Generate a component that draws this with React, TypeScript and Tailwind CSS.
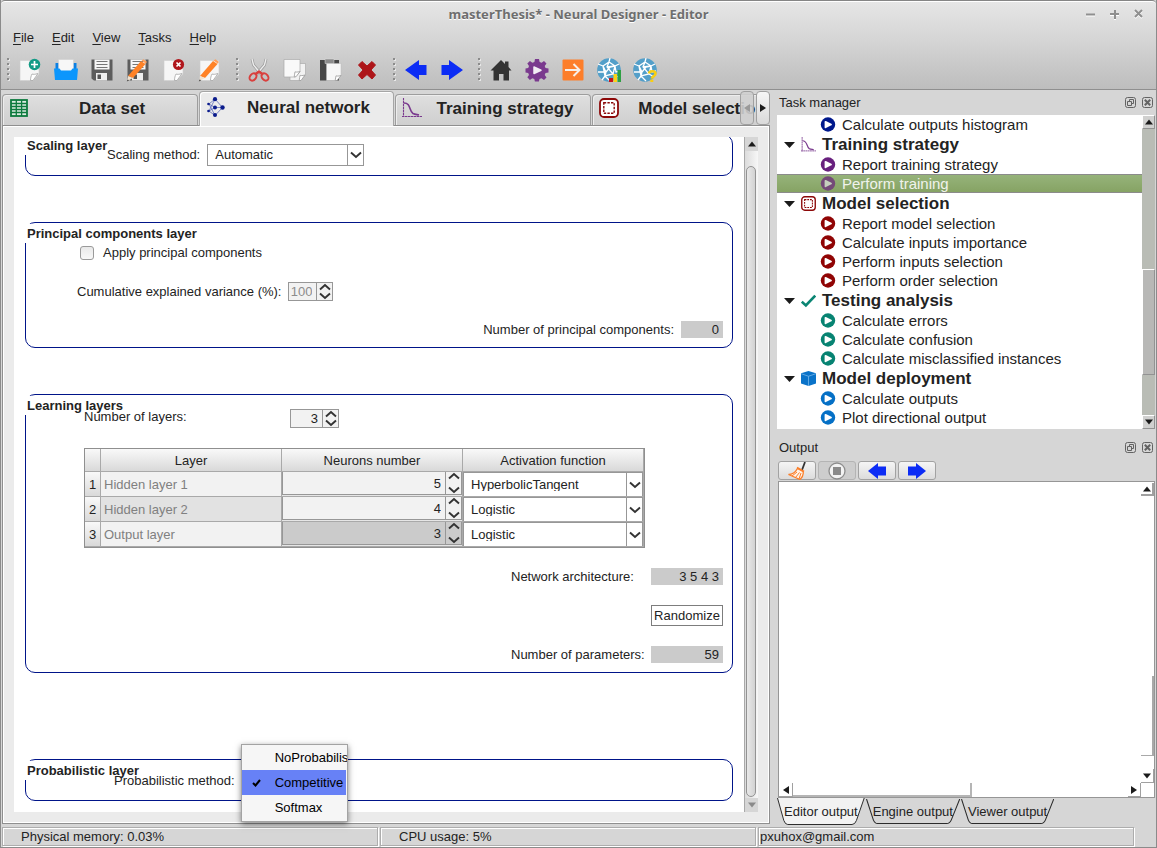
import React from "react";

type Kids = { children?: React.ReactNode };

/* ---------- toolbar drawings ---------- */

function Svg({ children }: Kids) {
  return (
    <svg viewBox="0 0 24 24" className="size-6" aria-hidden="true">
      {children}
    </svg>
  );
}

const sheet = (
  <>
    <path d="M2 2.500h19V16l-6 6.500H2z" fill="#f6f6f6" stroke="#cfcfcf" strokeWidth=".6" />
    <path d="M20 15.500c-3 1-5 1-6 .5-1 2-1.500 4-1.500 6.500H15z" fill="#fff" stroke="#a5a5a5" strokeWidth=".8" />
  </>
);

const pencil = (
  <>
    <path d="M2 18 15 3l4.500 3L7 20z" fill="#ff8227" />
    <path d="m15.500 2.500 2-1.200 3.300 2.400-.9 2z" fill="#ffa05c" />
    <path d="M2 18l5 2-5.500 3z" fill="#f3e3cf" />
    <path d="m1.700 21.500 1.500.8L.8 23.400z" fill="#333" />
  </>
);

const floppy = (
  <>
    <path d="M1.500 1.500h21v21H4l-2.500-2z" fill="#5d5d5d" />
    <path d="M4.500 1.500h15v10h-15z" fill="#f7f7f7" />
    <path d="M6.500 3.500h11M6.500 6.500h11M6.500 9.500h11" stroke="#777" />
    <path d="M6 15h11v7.500H6z" fill="#eee" />
    <path d="M7.500 16.500h3.500V21H7.500z" fill="#555" />
  </>
);

const globe = (
  <>
    <circle cx="12" cy="12" r="11.800" fill="#539fc9" />
    <path
      d="M6 8l6-4 6 4-2 8-8 2zM6 8 1 6M12 4l1-4M18 8l4-2M16 16l5 3M8 18l-3 4M6 8l3 6-1 4M12 4l-2 5 6 7M18 8l-5 1-4 5-8 0M10 9l8-1M8 18l5 5M18 8l1 6 4-1"
      fill="none"
      stroke="#fff"
      strokeWidth="1.300"
    />
  </>
);

const icons: Record<string, React.ReactNode> = {
  New: (
    <Svg>
      {sheet}
      <circle cx="16.500" cy="6.500" r="5.800" fill="#139b86" />
      <path d="M16.500 3v7M13 6.500h7" stroke="#fff" strokeWidth="1.700" />
    </Svg>
  ),
  Open: (
    <Svg>
      <path d="M1.500 5h21v8h-21z" fill="#0b80e4" />
      <path d="M4.500 1.500h15V14h-15z" fill="#f7f7f7" stroke="#cdcdcd" strokeWidth=".5" />
      <path d="M0 10.500h5.500l1.500 2h10l1.500-2H24L23 22H1z" fill="#0c96fc" />
    </Svg>
  ),
  Save: <Svg>{floppy}</Svg>,
  "Save as": (
    <Svg>
      {floppy}
      {pencil}
    </Svg>
  ),
  Close: (
    <Svg>
      {sheet}
      <circle cx="16.500" cy="6.500" r="5.600" fill="#b0161c" />
      <path d="m14.500 4.500 4 4m0-4-4 4" stroke="#fff" strokeWidth="1.700" />
    </Svg>
  ),
  Edit: (
    <Svg>
      {sheet}
      {pencil}
    </Svg>
  ),
  Cut: (
    <Svg>
      <path d="m5 1 1.500 6 8.500 10M19 1l-1.500 6L9 17" fill="none" stroke="#9a9a9a" strokeWidth="2.800" />
      <path d="m5 1 1.500 6 8.500 10M19 1l-1.500 6L9 17" fill="none" stroke="#eee" strokeWidth="1.400" />
      <ellipse cx="6" cy="19" rx="3" ry="4" transform="rotate(40 6 19)" fill="none" stroke="#d9403e" strokeWidth="2" />
      <ellipse cx="18" cy="19" rx="3" ry="4" transform="rotate(-40 18 19)" fill="none" stroke="#d9403e" strokeWidth="2" />
      <path d="m8 16.500 4-3 4 3" fill="none" stroke="#d9403e" strokeWidth="2.400" />
    </Svg>
  ),
  Copy: (
    <Svg>
      <path d="M7 5.500h15.500V17l-5 5.500H7z" fill="#f2f2f2" stroke="#aaa" strokeWidth=".7" />
      <path d="M22 17c-3 .8-4 .6-5 .3-.3 1.700-.5 3-.8 5.200H18z" fill="#fff" stroke="#999" strokeWidth=".8" />
      <path d="M1 1.500h16V14l-5 5H1z" fill="#f9f9f9" stroke="#aaa" strokeWidth=".7" />
      <path d="M17 13.500c-3 .8-4 .6-5 .3-.3 1.700-.5 3-.8 5H13z" fill="#fff" stroke="#999" strokeWidth=".8" />
    </Svg>
  ),
  Paste: (
    <Svg>
      <path d="M1 2h19v20.500H1z" fill="#474747" />
      <path d="M6 1h9v4.500H6z" fill="#8c8c8c" stroke="#ddd" strokeWidth=".5" />
      <path d="M7.500 5.500h14.500V18l-5 4.500H7.500z" fill="#f7f7f7" stroke="#bbb" strokeWidth=".5" />
      <path d="M22 17.500c-3 .8-4 .6-5 .3-.3 1.700-.5 2.500-.8 4.700H18z" fill="#fff" stroke="#999" strokeWidth=".8" />
    </Svg>
  ),
  Delete: (
    <Svg>
      <path
        d="M7 3.500 12 8l5-4.500L20.500 7 16 12l4.500 5-3.500 4-5-4.500L7 21l-3.500-4L8 12 3.500 7z"
        fill="#ad1519"
        stroke="#ad1519"
        strokeLinejoin="round"
      />
    </Svg>
  ),
  Back: (
    <Svg>
      <path d="M1 12 15 2v5h7.500v10H15v5z" fill="#0c2cf5" />
    </Svg>
  ),
  Forward: (
    <Svg>
      <path d="M23 12 9 2v5H1.500v10H9v5z" fill="#0c2cf5" />
    </Svg>
  ),
  Home: (
    <Svg>
      <path d="M12 2 1.500 12.500h3v10h5.500V16h4.500v6.500H20v-10h2.500L19.500 9V3.500H16V6z" fill="#333" />
    </Svg>
  ),
  Run: (
    <Svg>
      <path
        d="M10 1h4l.6 3 2 .8L19 3l2.500 2.500L19.700 8l.8 2 3 .6v3.800l-3 .6-.8 2 1.800 2.500L19 22l-2.500-1.700-2 .8-.6 2.400h-4l-.6-2.500-2-.8L4.900 22l-2.600-2.700L4 17l-.8-2-2.700-.6v-3.800l2.700-.6L4 8 2.300 5.500 4.900 3l2.500 1.800 2-.8z"
        fill="#7a3a8e"
      />
      <path d="m9 9 7 3.300L9 15.500z" fill="#f2eef4" stroke="#f2eef4" strokeWidth="1.500" strokeLinejoin="round" />
    </Svg>
  ),
  Export: (
    <Svg>
      <rect x="1.500" y="1.500" width="21" height="21" rx="1" fill="#fd7e2a" />
      <path d="M4 12h14M12.500 6l6 6-6 6" fill="none" stroke="#f7efe8" strokeWidth="2" />
    </Svg>
  ),
  Report: (
    <Svg>
      {globe}
      <path d="M12 20h4v4h-4z" fill="#c81518" />
      <path d="M16.500 16h3.500v8h-3.500z" fill="#fcd414" />
      <path d="M20.500 12H24v12h-3.500z" fill="#2ea043" />
    </Svg>
  ),
  Help: (
    <Svg>
      {globe}
      <path d="M16 15.500c.5-3 6.500-3 6.500.2 0 2.400-3.500 2.300-3.700 5" fill="none" stroke="#f8ce12" strokeWidth="2.600" />
      <path d="M17.300 21.500h3V24h-3z" fill="#f8ce12" />
    </Svg>
  ),
};

const toolGroups = [
  ["New", "Open", "Save", "Save as", "Close", "Edit"],
  ["Cut", "Copy", "Paste", "Delete"],
  ["Back", "Forward"],
  ["Home", "Run", "Export", "Report", "Help"],
];

function Handle() {
  return (
    <svg viewBox="0 0 3 24" className="mr-[2px] h-6 w-[3px]" aria-hidden="true">
      {[0, 5, 10, 15, 20].map((y) => (
        <g key={y}>
          <rect x="1" y={y + 1} width="2" height="2" fill="#e8e8e8" />
          <rect x="0" y={y} width="2" height="2" fill="#8b8b8b" />
        </g>
      ))}
    </svg>
  );
}

/* ---------- section drawings ---------- */

function CurveIcon() {
  return (
    <svg viewBox="0 0 20 20" className="size-full" fill="none" stroke="#7a3a8e" aria-hidden="true">
      <path d="M1.500 0v19M0 18.500h20" strokeWidth="1.100" strokeDasharray="2.500 .5" />
      <path d="M2 5c7 0 5 8 9 10.500 2 1 4 1 6 1.500" strokeWidth="1.600" />
    </svg>
  );
}

function SelectionIcon() {
  return (
    <svg viewBox="0 0 20 20" className="size-full" aria-hidden="true">
      <rect x="1" y="1" width="18" height="18" rx="4" fill="#fff" stroke="#8c0808" strokeWidth="1.800" />
      <rect x="4.800" y="4.800" width="10.400" height="10.400" fill="none" stroke="#8c0808" strokeWidth="1.400" strokeDasharray="2.400 1.200" />
    </svg>
  );
}

function GridIcon() {
  return (
    <svg viewBox="0 0 20 20" className="size-full" aria-hidden="true">
      <rect x="2" y="2" width="16" height="16" fill="#dcebe2" stroke="#0d7a3e" strokeWidth="1.800" />
      <path d="M2 5.500h16M2 8.500h16M2 11.500h16M2 14.500h16M7.300 2v16M12.600 2v16" stroke="#0d7a3e" strokeWidth="1.300" />
    </svg>
  );
}

function NetworkIcon() {
  return (
    <svg viewBox="0 0 20 20" className="size-full" aria-hidden="true">
      <path
        d="M3 7l6-5M3 7l6 3.500M3 7l6 11.500M3 14l6-12M3 14l6-3.500M3 14l6 4.500M9 2l7.500 8.500M9 10.500h7.500M9 18.500l7.500-8"
        stroke="#4a5bb5"
        strokeWidth=".7"
      />
      <g fill="#0a1b8c">
        <circle cx="2.500" cy="7" r="1.300" />
        <circle cx="2.500" cy="14" r="1.300" />
        <circle cx="9" cy="2.200" r="2.100" />
        <circle cx="9" cy="10.500" r="2" />
        <circle cx="9" cy="18" r="2" />
        <circle cx="16.500" cy="10.500" r="2.200" />
      </g>
    </svg>
  );
}

function TickIcon() {
  return (
    <svg viewBox="0 0 20 20" className="size-full" aria-hidden="true">
      <path d="M1 11.500 6.500 16.500 19 3.500" fill="none" stroke="#0a8573" strokeWidth="3.600" />
    </svg>
  );
}

function CubeIcon() {
  return (
    <svg viewBox="0 0 20 20" className="size-full" aria-hidden="true">
      <path d="M0 3 10 0l10 3v13.500L10 20 0 16.500z" fill="#0a73c9" />
      <path d="m0 3.500 10 3.500 10-3.500M10 7v13" fill="none" stroke="#7db9ea" />
    </svg>
  );
}

function PlayDot({ color, dim }: { color: string; dim?: boolean }) {
  return (
    <svg viewBox="0 0 16 16" className="size-4 shrink-0" aria-hidden="true">
      <circle cx="8" cy="7.500" r="7.200" fill={color} />
      <path
        d="M5.500 4.800 11 7.500l-5.500 2.800z"
        fill={dim ? "#c5d0bd" : "#fff"}
        stroke={dim ? "#c5d0bd" : "#fff"}
        strokeWidth="1.800"
        strokeLinejoin="round"
      />
    </svg>
  );
}

function Triangle({ dir, color = "#1b1b1b" }: { dir: "up" | "down" | "left" | "right"; color?: string }) {
  const d = {
    up: "M1 7.500h8L5 2.500z",
    down: "M1 2.500h8L5 7.500z",
    left: "M8 1v8L2 5z",
    right: "M2 1v8l6-4z",
  }[dir];
  return (
    <svg viewBox="0 0 10 10" className="size-[10px] shrink-0" aria-hidden="true">
      <path d={d} fill={color} />
    </svg>
  );
}

/* ---------- form parts ---------- */

function Chevron({ up }: { up?: boolean }) {
  return (
    <svg viewBox="0 0 12 8" className="h-2 w-3" fill="none" stroke="#333" strokeWidth="1.900" aria-hidden="true">
      <path d={up ? "M1 6.500l5-4.500L11 6.500" : "M1 1.500l5 4.500L11 1.500"} />
    </svg>
  );
}

function Combo({ id, label, value, className, clipped }: { id: string; label?: string; value: string; className: string; clipped?: boolean }) {
  return (
    <div className={`relative flex border border-[#979797] bg-white ${className}`}>
      <select
        id={id}
        aria-label={label}
        defaultValue={value}
        className={
          clipped
            ? "mt-1 mb-[5px] block h-[14px] w-full appearance-none overflow-hidden pl-[7px] pr-4 text-[13px] leading-[15px]"
            : "block h-full w-full appearance-none pl-[7px] pr-4 text-[13px]"
        }
      >
        <option>{value}</option>
      </select>
      <span className="pointer-events-none absolute inset-y-0 right-0 flex w-4 items-center justify-center border-l border-[#979797]">
        <Chevron />
      </span>
    </div>
  );
}

function Spin({ id, label, value, className, disabled }: { id: string; label?: string; value: number; className: string; disabled?: boolean }) {
  return (
    <div className={`flex border border-[#979797] ${className}`}>
      <input
        id={id}
        aria-label={label}
        type="number"
        defaultValue={value}
        disabled={disabled}
        className="h-full w-0 min-w-0 flex-1 appearance-none pr-1 text-right text-[13px] [-moz-appearance:textfield] disabled:text-[#8c8c8c] [&::-webkit-inner-spin-button]:appearance-none"
      />
      <div className="flex w-4 flex-col items-center justify-between border-l border-[#979797]">
        <button type="button" aria-label="Increase">
          <span className="block">
            <Chevron up />
          </span>
        </button>
        <button type="button" aria-label="Decrease">
          <span className="block">
            <Chevron />
          </span>
        </button>
      </div>
    </div>
  );
}

function Group({ title, className, children }: Kids & { title: string; className: string }) {
  return (
    <section className={`mr-[11px] ml-[11px] flow-root rounded-[10px] border border-[#001489] ${className}`}>
      <h3 className="mt-px -ml-px h-[19px] w-fit bg-white pt-[2px] pl-[2px] leading-4 font-bold">{title}</h3>
      {children}
    </section>
  );
}

function ReadOut({ id, children, className }: Kids & { id: string; className: string }) {
  return (
    <output id={id} className={`block h-[17px] bg-[#cbcbcb] pr-1 text-right leading-[17px] ${className}`}>
      {children}
    </output>
  );
}

const layers = [
  { name: "Hidden layer 1", neurons: 5, fn: "HyperbolicTangent", bg: "bg-[#f2f2f2]", spin: "bg-[#f2f2f2]" },
  { name: "Hidden layer 2", neurons: 4, fn: "Logistic", bg: "bg-[#e2e2e2]", spin: "bg-[#f2f2f2]" },
  { name: "Output layer", neurons: 3, fn: "Logistic", bg: "bg-[#f2f2f2]", spin: "bg-[#cbcbcb]" },
];

function LayerTable() {
  const th = "h-[23px] border-r border-b border-[#a9a9a9] bg-linear-to-b from-[#f9f9f9] to-[#d9d9d9] p-0 pt-px font-normal";
  return (
    <table className="mt-5 ml-[58px] w-[561px] table-fixed border-separate border-spacing-0 border border-[#8f8f8f]">
      <colgroup>
        <col className="w-4" />
        <col className="w-[181px]" />
        <col className="w-[181px]" />
        <col />
      </colgroup>
      <thead>
        <tr>
          <th className={th} aria-label="Row" />
          <th className={th}>Layer</th>
          <th className={th}>Neurons number</th>
          <th className={th}>Activation function</th>
        </tr>
      </thead>
      <tbody>
        {layers.map((l, i) => (
          <tr key={l.name}>
            <th className="h-[25px] border-r border-b border-[#a9a9a9] bg-linear-to-b from-[#f9f9f9] to-[#d9d9d9] p-0 pt-px font-normal">{i + 1}</th>
            <td className={`border-r border-b border-[#a9a9a9] p-0 pt-px pl-[3px] text-[#808080] ${l.bg}`}>{l.name}</td>
            <td className="border-r border-b border-[#a9a9a9] bg-[#e6e6e6] p-0 align-top">
              <Spin id={`neurons-${i}`} label={`${l.name} neurons`} value={l.neurons} className={`h-[23px] border-t-0 ${l.spin}`} />
            </td>
            <td className="border-r border-b border-[#a9a9a9] p-0 align-top">
              <Combo id={`fn-${i}`} label={`${l.name} activation`} value={l.fn} className="h-6 border-b-0" clipped />
            </td>
          </tr>
        ))}
      </tbody>
    </table>
  );
}

function MethodMenu() {
  const items = ["NoProbabilistic", "Competitive", "Softmax"];
  return (
    <div className="relative">
      <select id="prob-method" defaultValue="Competitive" className="block h-5 w-[107px] appearance-none border border-[#979797] pl-2">
        {items.map((m) => (
          <option key={m}>{m}</option>
        ))}
      </select>
      <ul
        role="listbox"
        aria-label="Probabilistic method"
        className="absolute -top-7 left-0 z-10 w-[107px] overflow-hidden border border-[#a3a3a3] bg-[#f6f6f6] pb-px text-black shadow-[0_2px_6px_rgba(0,0,0,0.5)]"
      >
        {items.map((m) => {
          const on = m === "Competitive";
          return (
            <li
              key={m}
              role="option"
              aria-selected={on}
              className={`flex h-[25px] items-center whitespace-nowrap ${on ? "mr-px bg-[#6781f6]" : ""}`}
            >
              <span className="flex w-[33px] shrink-0 justify-center pr-1">
                {on && (
                  <svg viewBox="0 0 9 8" className="h-2 w-[9px]" aria-hidden="true">
                    <path d="m1 4 2.500 2.500L8 1" fill="none" stroke="#000" strokeWidth="2" />
                  </svg>
                )}
              </span>
              {m}
            </li>
          );
        })}
      </ul>
    </div>
  );
}

function NetworkPane() {
  return (
    <div className="relative z-10 flex flex-1 border border-[#8f8f8f] bg-[#ebebeb] p-[11px] shadow-[inset_1px_1px_0_#fff,inset_-1px_-1px_0_#fff]">
      <div className="min-w-0 flex-1 bg-white pb-[11px] [clip-path:inset(0_0_-24px_0)]">
        <Group title="Scaling layer" className="-mt-[3px] h-[42px]">
          <div className="-mt-[11px] flex items-center gap-[7px] pl-[81px]">
            <label htmlFor="scaling">Scaling method:</label>
            <Combo id="scaling" value="Automatic" className="h-[22px] w-[157px]" />
          </div>
        </Group>

        <Group title="Principal components layer" className="mt-[46px] pb-[9px]">
          <div className="mt-[2px] flex h-[15px] items-center gap-[9px] pl-[54px]">
            <input
              id="apply-pc"
              type="checkbox"
              className="size-[14px] appearance-none rounded-[3px] border border-[#9a9a9a] bg-linear-to-b from-[#e9e9e9] to-[#f8f8f8]"
            />
            <label htmlFor="apply-pc">Apply principal components</label>
          </div>
          <div className="mt-[22px] flex items-center gap-[7px] pl-[51px]">
            <label htmlFor="variance">Cumulative explained variance (%):</label>
            <Spin id="variance" value={100} disabled className="h-[19px] w-[45px] bg-[#f2f2f2]" />
          </div>
          <div className="mt-5 flex items-center justify-end gap-[7px] pr-[9px]">
            <label htmlFor="pc-count">Number of principal components:</label>
            <ReadOut id="pc-count" className="w-[42px]">0</ReadOut>
          </div>
        </Group>

        <Group title="Learning layers" className="mt-[46px] pb-[9px]">
          <div className="-mt-[6px] flex h-[19px] items-start pl-[58px]">
            <label htmlFor="layer-count" className="w-[206px] leading-[15px]">
              Number of layers:
            </label>
            <Spin id="layer-count" value={3} className="h-[19px] w-[49px] bg-[#f2f2f2]" />
          </div>
          <LayerTable />
          <div className="mt-5 grid grid-cols-[133px_72px] items-center justify-end gap-x-[7px] gap-y-5 pr-[9px]">
            <label htmlFor="architecture">Network architecture:</label>
            <ReadOut id="architecture" className="w-full">3 5 4 3</ReadOut>
            <button type="button" className="col-start-2 h-[21px] border border-[#7d7d7d] bg-white">
              Randomize
            </button>
            <label htmlFor="params" className="whitespace-nowrap">Number of parameters:</label>
            <ReadOut id="params" className="w-full">59</ReadOut>
          </div>
        </Group>

        <Group title="Probabilistic layer" className="mt-[86px] h-[42px]">
          <div className="-mt-2 flex items-start gap-[6px] pl-[88px]">
            <label htmlFor="prob-method" className="leading-[18px]">
              Probabilistic method:
            </label>
            <MethodMenu />
          </div>
        </Group>
      </div>

      <div className="flex w-[14px] flex-col border-l border-[#a9a9a9] bg-linear-to-r from-[#dcdcdc] to-[#f7f7f7]">
        <div className="flex h-[14px] items-center justify-center bg-[#d6d6d6]">
          <Triangle dir="up" />
        </div>
        <div className="mt-[15px] mb-px ml-px w-[10px] flex-1 rounded-full border border-[#939393] bg-linear-to-r from-[#e9e9e9] to-[#d2d2d2]" />
        <div className="flex h-[14px] items-center justify-center bg-[#d6d6d6]">
          <Triangle dir="down" color="#8a8a8a" />
        </div>
      </div>
    </div>
  );
}

const tabs = [
  { label: "Data set", icon: <GridIcon /> },
  { label: "Neural network", icon: <NetworkIcon />, active: true },
  { label: "Training strategy", icon: <CurveIcon /> },
  { label: "Model selection", icon: <SelectionIcon /> },
];

function TabRow() {
  const step = "flex h-[34px] w-[14px] items-center justify-center rounded-[4px] border border-[#a0a0a0]";
  return (
    <div className="relative z-20 -mb-px flex h-9 items-start overflow-hidden pt-px">
      {tabs.map((t) => (
        <button
          key={t.label}
          type="button"
          className={
            t.active
              ? "mr-px flex h-[35px] w-[195px] shrink-0 items-start rounded-t-[4px] border border-b-0 border-[#a6a6a6] bg-[#ebebeb] pt-[5px] pr-[2px] pl-[6px] shadow-[inset_1px_1px_0_#fff]"
              : "mt-[3px] mr-px flex h-[31px] w-[196px] shrink-0 items-start rounded-t-[4px] border border-b-0 border-[#9d9d9d] bg-linear-to-b from-[#dfdfdf] to-[#cfcfcf] pt-[3px] pr-[2px] pl-[6px] shadow-[inset_1px_1px_0_#ededed]"
          }
        >
          <span className="size-5 shrink-0">{t.icon}</span>
          <span className="flex-1 text-center text-[17px] leading-[22px] font-bold whitespace-nowrap">{t.label}</span>
        </button>
      ))}
      <div className="absolute top-px right-0 flex gap-[2px]">
        <button type="button" aria-label="Scroll tabs left" className={`${step} bg-[#cfcfcf]/90`}>
          <Triangle dir="left" color="#9a9a9a" />
        </button>
        <button type="button" aria-label="Scroll tabs right" className={`${step} bg-linear-to-b from-[#f6f6f6] to-[#dadada]`}>
          <Triangle dir="right" />
        </button>
      </div>
    </div>
  );
}

/* ---------- right side ---------- */

function DockTitle({ children }: Kids) {
  return (
    <div className="flex h-[25px] items-center gap-[6px] pr-[3px] pl-[2px]">
      <h2 className="flex-1">{children}</h2>
      <button type="button" aria-label="Float">
        <svg viewBox="0 0 11 11" className="size-[11px]" fill="none" stroke="#636363" aria-hidden="true">
          <rect x=".5" y=".5" width="10" height="10" rx="2" />
          <path d="M4.500 2.500h4v4h-2M4.500 2.500v2M2.500 4.500h4v4h-4z" />
        </svg>
      </button>
      <button type="button" aria-label="Close panel">
        <svg viewBox="0 0 11 11" className="size-[11px]" fill="none" stroke="#636363" aria-hidden="true">
          <rect x=".5" y=".5" width="10" height="10" rx="2" />
          <path d="m2.800 2.800 5.400 5.400m0-5.400L2.800 8.200" strokeWidth="2" />
        </svg>
      </button>
    </div>
  );
}

const tree: { label: string; color?: string; icon?: React.ReactNode; selected?: boolean }[] = [
  { label: "Calculate outputs histogram", color: "#00188c" },
  { label: "Training strategy", icon: <CurveIcon /> },
  { label: "Report training strategy", color: "#68207e" },
  { label: "Perform training", color: "#744a78", selected: true },
  { label: "Model selection", icon: <SelectionIcon /> },
  { label: "Report model selection", color: "#900404" },
  { label: "Calculate inputs importance", color: "#900404" },
  { label: "Perform inputs selection", color: "#900404" },
  { label: "Perform order selection", color: "#900404" },
  { label: "Testing analysis", icon: <TickIcon /> },
  { label: "Calculate errors", color: "#078372" },
  { label: "Calculate confusion", color: "#078372" },
  { label: "Calculate misclassified instances", color: "#078372" },
  { label: "Model deployment", icon: <CubeIcon /> },
  { label: "Calculate outputs", color: "#0570c6" },
  { label: "Plot directional output", color: "#0570c6" },
];

function TaskManager() {
  const knob = "flex h-[14px] items-center justify-center border border-[#929292] border-t-white border-l-white bg-[#d0d0cf]";
  return (
    <section>
      <DockTitle>Task manager</DockTitle>
      <div className="mr-px flex h-[314px]">
        <ul className="min-w-0 flex-1 overflow-hidden bg-white">
          {tree.map((n) =>
            n.icon ? (
              <li key={n.label} className="flex h-[21px] items-center pl-[7px] text-[17px] leading-[21px] font-bold">
                <svg viewBox="0 0 11 6" className="mr-[6px] h-[6px] w-[11px] shrink-0" aria-hidden="true">
                  <path d="M0 0h11L5.500 6z" fill="#1b1b1b" />
                </svg>
                <span className="mr-[6px] size-[15px] shrink-0">{n.icon}</span>
                {n.label}
              </li>
            ) : (
              <li
                key={n.label}
                className={`flex h-[19px] items-center gap-[6px] pl-[43px] text-[15px] leading-[19px] ${
                  n.selected ? "border-y border-[#8b8b8b] bg-linear-to-b from-[#96b37a] to-[#86a364] text-[#f0f3ec]" : ""
                }`}
              >
                <PlayDot color={n.color ?? ""} dim={n.selected} />
                {n.label}
              </li>
            ),
          )}
        </ul>
        <div className="flex w-[13px] flex-col bg-[#b9bcb5]">
          <div className={knob}>
            <Triangle dir="up" />
          </div>
          <div className="mt-[140px] h-[106px] border border-[#929292] border-t-white border-l-white bg-[#b8b8b6]" />
          <div className={`${knob} mt-auto`}>
            <Triangle dir="down" />
          </div>
        </div>
      </div>
    </section>
  );
}

function Broom() {
  return (
    <svg viewBox="0 0 20 18" className="h-[18px] w-5" aria-hidden="true">
      <path d="M18 0 15 8" stroke="#333" strokeWidth="1.800" />
      <path d="M10.500 6.500 16 9.500c1 3-1 6-3 8L1.500 12.500c4 0 7-2.500 9-6z" fill="#fff2e6" stroke="#fb7f2b" strokeWidth="1.300" />
      <path d="m5 14 5-4M8.500 15.500l4-5M12 17l2-6" stroke="#fb7f2b" fill="none" />
      <path d="m10 5.500 7 4" stroke="#fb7f2b" strokeWidth="1.600" />
    </svg>
  );
}

const outputTabs = ["Editor output", "Engine output", "Viewer output"];

function OutputPanel() {
  const btn = "flex h-[19px] w-[38px] items-center justify-center rounded-[3px] border border-[#a2a2a2] bg-linear-to-b from-[#f5f5f5] to-[#dcdcdc]";
  const small = "flex items-center justify-center border-[#a0a0a0]";
  return (
    <section className="mt-[6px] flex flex-1 flex-col">
      <DockTitle>Output</DockTitle>
      <div className="mt-px flex gap-[2px] pl-px">
        <button type="button" aria-label="Clear" className={btn}>
          <Broom />
        </button>
        <button type="button" aria-label="Stop" className="flex h-[19px] w-[38px] items-center justify-center rounded-[3px] border border-[#b4b4b4] bg-[#cdcdcd]">
          <svg viewBox="0 0 18 18" className="size-[18px]" aria-hidden="true">
            <circle cx="9" cy="9" r="8" fill="#f3f3f3" stroke="#8d8d8d" strokeWidth="1.300" />
            <path d="M5 5h8v8H5z" fill="#8a8a8a" />
          </svg>
        </button>
        <button type="button" aria-label="Previous" className={btn}>
          <svg viewBox="0 0 18 16" className="h-4 w-[18px]" aria-hidden="true">
            <path d="M0 8 10 0v3.500h8v9h-8V16z" fill="#0c2cf5" />
          </svg>
        </button>
        <button type="button" aria-label="Next" className={btn}>
          <svg viewBox="0 0 18 16" className="h-4 w-[18px]" aria-hidden="true">
            <path d="M18 8 8 0v3.500H0v9h8V16z" fill="#0c2cf5" />
          </svg>
        </button>
      </div>

      <div className="mt-px mr-px ml-px flex flex-1 flex-col border border-[#969696] bg-white pt-px">
        <div className="flex flex-1">
          <textarea readOnly aria-label="Editor output" className="min-w-0 flex-1 resize-none outline-none" />
          <div className="flex w-[13px] flex-col">
            <div className={`${small} h-[13px] border-r-2 border-b-2`}>
              <Triangle dir="up" />
            </div>
            <div className="mt-auto h-20 border-r-2 border-b border-[#a9a9a9]" />
            <div className={`${small} mt-[13px] h-[14px] border-r border-b`}>
              <Triangle dir="down" />
            </div>
          </div>
        </div>
        <div className="flex h-[14px] pr-[13px]">
          <div className={`${small} w-[14px] border-r border-b`}>
            <Triangle dir="left" />
          </div>
          <div className="w-[179px] border-r-2 border-b-2 border-[#b5b5b5]" />
          <div className={`${small} ml-auto w-[13px] border-r border-b`}>
            <Triangle dir="right" />
          </div>
        </div>
      </div>

      <div className="flex h-[27px] items-start gap-px">
        {outputTabs.map((t, i) => (
          <button key={t} type="button" className={i === 0 ? "relative h-[27px] px-[7px]" : "relative mt-px h-[25px] px-[7px]"}>
            <svg viewBox="0 0 90 27" preserveAspectRatio="none" className="absolute inset-0 size-full" aria-hidden="true">
              <path
                d="M.5 0 7 22.500Q8.500 26.500 11 26.500H77Q80 26.500 81.500 22.500L89.500 0"
                fill={i === 0 ? "#f2f2f2" : "none"}
                stroke="#2a2a2a"
                strokeWidth="1"
              />
            </svg>
            <span className="relative whitespace-nowrap">{t}</span>
          </button>
        ))}
      </div>
    </section>
  );
}

/* ---------- window ---------- */

export default function App() {
  return (
    <div className="flex min-h-screen flex-col border-r border-b border-l border-[#8b8b8b] bg-[#d6d6d6] font-['Liberation_Sans',Arial,sans-serif] text-[13px] leading-4 text-[#232323]">
      <header className="rounded-t-[4px] border-t border-b border-t-[#858585] border-b-[#8f8f8f] bg-linear-to-b from-[#e6e6e6] via-[#d5d5d5] via-45% to-[#bdbdbd] shadow-[inset_0_1px_0_#fff]">
        <div className="relative flex h-[26px] items-center justify-center">
          <h1 className="font-['Noto_Sans','Open_Sans',sans-serif] text-[13px] font-bold text-[#6e6e6e] [text-shadow:0_1px_0_#fff]">
            masterThesis* - Neural Designer - Editor
          </h1>
          <div className="absolute right-3 flex gap-[14px]">
            {["M0 5.500h9", "M0 5h9M5 1v9", "m1 1 7 7m0-7L1 8"].map((d, i) => (
              <button key={d} type="button" aria-label={["Minimize", "Maximize", "Close"][i]}>
                <svg viewBox="0 0 10 11" className="h-[11px] w-[10px]" fill="none" strokeWidth="2" aria-hidden="true">
                  <path d={d} stroke="#fff" transform="translate(0 1)" />
                  <path d={d} stroke="#8f8f8f" />
                </svg>
              </button>
            ))}
          </div>
        </div>
        <nav className="flex h-[22px] items-center gap-[18px] pl-3">
          {["File", "Edit", "View", "Tasks", "Help"].map((m) => (
            <button key={m} type="button">
              <u className="underline-offset-2">{m[0]}</u>
              {m.slice(1)}
            </button>
          ))}
        </nav>
        <div className="flex h-10 items-center gap-2 pt-px pl-[6px]">
          {toolGroups.map((g) => (
            <div key={g[0]} className="flex items-center">
              <Handle />
              {g.map((name) => (
                <button key={name} type="button" aria-label={name} className="flex w-9 justify-center">
                  {icons[name]}
                </button>
              ))}
            </div>
          ))}
        </div>
      </header>

      <main className="flex flex-1">
        <div className="flex min-w-0 flex-1 flex-col pb-px pl-px">
          <TabRow />
          <NetworkPane />
        </div>
        <aside className="flex w-[386px] shrink-0 flex-col pl-[7px]">
          <TaskManager />
          <OutputPanel />
        </aside>
      </main>

      <footer className="flex h-[22px] gap-[2px] pt-[2px] pr-[22px] pb-px pl-px">
        {[
          { text: "Physical memory: 0.03%", pad: "pl-[18px]" },
          { text: "CPU usage: 5%", pad: "pl-[18px]" },
          { text: "pxuhox@gmail.com", pad: "pl-px" },
        ].map((s) => (
          <div key={s.text} className="flex flex-1 items-center border border-[#adadad] shadow-[inset_1px_1px_0_#fff,1px_1px_0_#fff]">
            <span className={s.pad}>{s.text}</span>
          </div>
        ))}
      </footer>
    </div>
  );
}
